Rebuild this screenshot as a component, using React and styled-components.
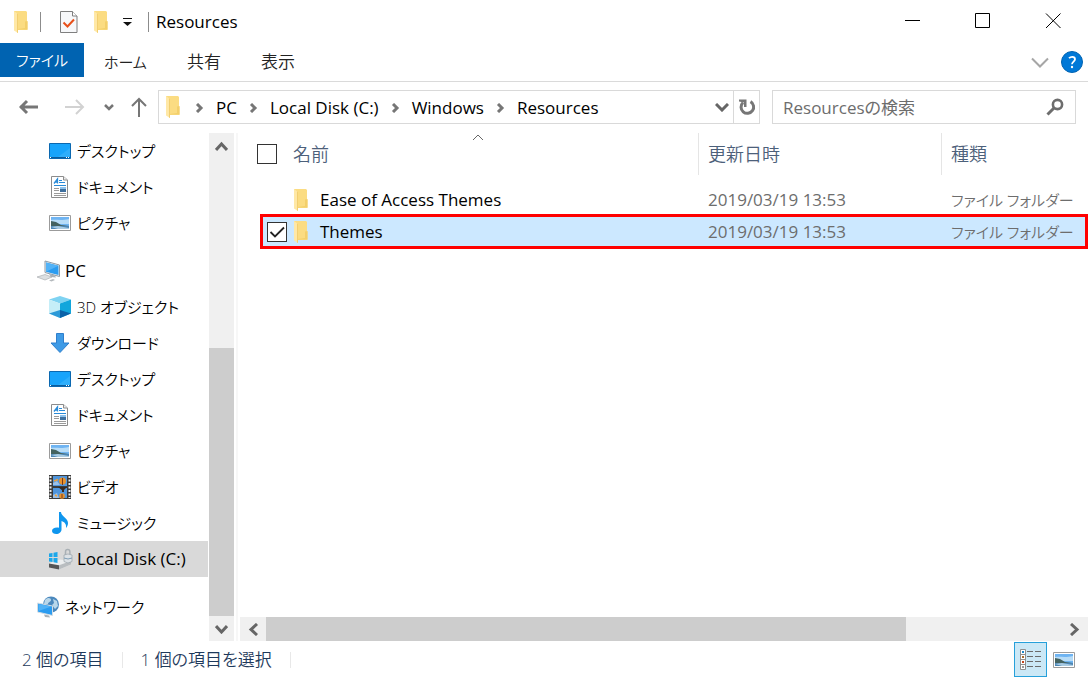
import React, { useState } from 'react';
import styled, { createGlobalStyle } from 'styled-components';

const GlobalStyle = createGlobalStyle`
  * {
    box-sizing: border-box;
  }
  html,
  body,
  #root {
    height: 100%;
    margin: 0;
  }
  body {
    background: #fff;
    color: #000;
    font: 17px/24px 'Open Sans', 'Noto Sans CJK JP', sans-serif;
    font-feature-settings: 'palt';
  }
  button,
  input {
    font: inherit;
    font-feature-settings: inherit;
    color: inherit;
  }
  svg {
    display: block;
    flex: none;
  }
`;

const Window = styled.div`
  display: flex;
  flex-direction: column;
  min-height: 100%;
  overflow: hidden;
`;

const PlainButton = styled.button`
  display: flex;
  align-items: center;
  justify-content: center;
  padding: 0;
  border: 0;
  background: none;
  white-space: nowrap;
`;

/* title bar */

const TitleBar = styled.header`
  display: flex;
  align-items: center;
  height: 43px;
  padding-left: 13px;
`;

const QuickAccess = styled.div`
  display: flex;
  align-items: center;
  gap: 15px;
`;

const AppIcon = styled.div`
  display: flex;
  align-items: center;
  gap: 12px;
  margin-right: 4px;
`;

const Divider = styled.span`
  width: 1px;
  height: ${(props) => props.$height || 20}px;
  background: ${(props) => props.$color || '#8c8c8c'};
`;

const Title = styled.h1`
  flex: 1;
  margin: 0 0 0 7px;
  font-size: 17px;
  font-weight: 400;
`;

const CaptionButton = styled(PlainButton)`
  width: 70px;
  height: 41px;
  margin-bottom: 2px;
`;

/* ribbon */

const Ribbon = styled.nav`
  display: flex;
  height: 39px;
  padding-right: 5px;
  border-bottom: 1px solid #dadada;
`;

const RibbonTab = styled(PlainButton)`
  height: 38px;
  padding: 0 20px;
  color: #222;
  font-size: ${(props) => (props.$kana ? 15 : 17)}px;
  font-weight: 350;
`;

const FileTab = styled(RibbonTab)`
  width: 84px;
  height: 34px;
  padding: 0;
  background: #0063b1;
  color: #fff;
`;

const RibbonTools = styled.div`
  display: flex;
  align-items: center;
  gap: 12px;
  margin-left: auto;
`;

/* address row */

const AddressRow = styled.div`
  display: flex;
  align-items: center;
  height: 51px;
  padding: 0 12px 1px 18px;
`;

const NavButtons = styled.div`
  display: flex;
  align-items: center;
  width: 140px;
`;

const NavButton = styled(PlainButton)`
  width: 22px;
  height: 34px;
  margin-right: ${(props) => props.$gap || 0}px;
`;

const AddressBox = styled.div`
  display: flex;
  flex: 1;
  align-items: center;
  height: 34px;
  padding-left: 6px;
  border: 1px solid #d9d9d9;
`;

const Crumbs = styled.ol`
  display: flex;
  flex: 1;
  margin: 0;
  padding: 2px 0 0 15px;
  list-style: none;
`;

const Crumb = styled.li`
  display: flex;
  align-items: center;
  gap: 12px;
  margin-right: 12px;
  white-space: nowrap;
`;

const RefreshButton = styled(PlainButton)`
  width: 26px;
  height: 32px;
  border-left: 1px solid #d9d9d9;
`;

const SearchBox = styled.label`
  display: flex;
  align-items: center;
  width: 304px;
  height: 34px;
  margin-left: 12px;
  padding: 0 11px 0 10px;
  border: 1px solid #d9d9d9;
`;

const SearchInput = styled.input`
  flex: 1;
  min-width: 0;
  padding: 2px 0 0;
  border: 0;
  outline: 0;
  background: none;
  &::placeholder {
    color: #6d6d6d;
    opacity: 1;
  }
`;

/* body */

const Body = styled.div`
  display: flex;
  flex: 1;
`;

const Sidebar = styled.aside`
  display: flex;
  width: 238px;
  border-right: 2px solid #f7f7f7;
`;

const Tree = styled.ul`
  width: 208px;
  margin: 0;
  padding: 0;
  list-style: none;
`;

const TreeItem = styled.li`
  margin-top: ${(props) => (props.$spaced ? 12 : 0)}px;
`;

const TreeLink = styled.a`
  display: flex;
  align-items: center;
  height: 36px;
  padding-left: ${(props) => (props.$root ? 37 : 49)}px;
  background: ${(props) => (props.$selected ? '#d9d9d9' : 'transparent')};
  color: #000;
  font-size: ${(props) => (props.$kana ? 15 : 17)}px;
  font-weight: ${(props) => (props.$kana ? 350 : 400)};
  text-decoration: none;
  white-space: nowrap;
`;

const TreeIcon = styled.span`
  width: 28px;
`;

const ScrollBar = styled.div`
  display: flex;
  flex-direction: ${(props) => (props.$horizontal ? 'row' : 'column')};
  width: ${(props) => (props.$horizontal ? 'auto' : '25px')};
  height: ${(props) => (props.$horizontal ? '24px' : 'auto')};
  margin-left: ${(props) => (props.$horizontal ? 0 : 1)}px;
  background: #f0f0f0;
`;

const ScrollButton = styled(PlainButton)`
  flex: none;
  width: ${(props) => (props.$wide ? 26 : 25)}px;
  height: ${(props) => (props.$wide ? 24 : 25)}px;
`;

const ScrollSpace = styled.div`
  flex: ${(props) => props.$part} 0 0;
`;

const ScrollThumb = styled.div`
  flex: ${(props) => props.$part} 0 0;
  background: #cdcdcd;
`;

const Main = styled.main`
  display: flex;
  flex: 1;
  flex-direction: column;
  min-width: 0;
  padding-left: 2px;
`;

const FileArea = styled.div`
  flex: 1;
  padding-left: 17px;
`;

const FileTable = styled.table`
  width: 100%;
  border-spacing: 0;
  table-layout: fixed;
`;

const HeadCell = styled.th`
  position: relative;
  width: ${(props) => props.$width || 'auto'};
  padding: 0 0 9px;
  color: #4c607a;
  font-size: 18px;
  font-weight: 350;
  text-align: left;
`;

const HeadLabel = styled.div`
  display: flex;
  align-items: center;
  gap: 16px;
  height: 42px;
  padding-left: ${(props) => (props.$line ? 9 : 0)}px;
  border-left: ${(props) => (props.$line ? '1px solid #e5e5e5' : '0')};
`;

const SortMark = styled.span`
  position: absolute;
  top: 1px;
  left: 50%;
  margin-left: -6px;
`;

const FileCell = styled.td`
  height: 32px;
  padding: 0 0 0 10px;
  color: #6d6d6d;
  white-space: nowrap;
`;

const KanaText = styled.span`
  font-size: 15px;
  font-weight: 350;
`;

const NameCell = styled(FileCell)`
  padding-left: 7px;
  border-left: 3px solid transparent;
  background-clip: padding-box;
  color: #000;
`;

const FileRow = styled.tr`
  position: relative;
  ${(props) =>
    props.$selected &&
    `
    td {
      background-color: #cce8ff;
    }
    ${NameCell}::after {
      content: '';
      position: absolute;
      inset: -2px 0 -1px 3px;
      border: 3px solid #f00;
      pointer-events: none;
    }
  `}
`;

const NameLabel = styled.label`
  display: flex;
  align-items: center;
  gap: 6px;
`;

const FileName = styled.span`
  padding-left: 6px;
`;

const CheckBox = styled.input`
  flex: none;
  width: 20px;
  height: 20px;
  margin: 0;
  appearance: none;
  border: 1px solid #333;
  background: #fff;
  visibility: ${(props) => (props.$hidden ? 'hidden' : 'visible')};
  &:checked {
    background: #fff
      url("data:image/svg+xml,%3Csvg xmlns='http://www.w3.org/2000/svg' width='18' height='18'%3E%3Cpath d='M2.500 9l4.500 4.500L16 4.500' fill='none' stroke='%23222' stroke-width='1.800'/%3E%3C/svg%3E");
  }
`;

/* status bar */

const StatusBar = styled.footer`
  display: flex;
  align-items: center;
  gap: 18px;
  height: 37px;
  padding: 0 11px 0 22px;
  color: #1e395b;
  font-weight: 350;
`;

const ViewButtons = styled.div`
  display: flex;
  align-items: center;
  gap: 4px;
  margin-left: auto;
`;

const ViewButton = styled(PlainButton)`
  width: ${(props) => (props.$active ? 33 : 26)}px;
  height: 35px;
  border: ${(props) => (props.$active ? '1px solid #26a0da' : '0')};
  background: ${(props) => (props.$active ? '#cbe8f6' : 'none')};
`;

/* icons */

const FolderIcon = () => (
  <svg width="15" height="22" viewBox="0 0 15 22">
    <path d="M1 0h12l1 1v9l.5 1v8H1z" fill="#fbdc82" />
    <path d="M12 10.500l2.500-.5v8.500H5V18l7-1z" fill="#f3cf6b" />
    <path d="M1 0l4 3v19l-4-2.500z" fill="#ffe8a6" />
    <path d="M5 3v19l-1-.6V2.200z" fill="#f2cf72" />
  </svg>
);

const PropertiesIcon = () => (
  <svg width="18" height="22" viewBox="0 0 18 22">
    <path d="M.5.5h12l4.500 4.500v16.500H.5z" fill="#f7f8fa" stroke="#7f7f7f" />
    <path d="M12.500.5V5H17" fill="#fff" stroke="#7f7f7f" />
    <path d="M3.500 11.500l4 4 6.500-7" fill="none" stroke="#e8501a" strokeWidth="2" />
  </svg>
);

const MenuArrowIcon = () => (
  <svg width="10" height="8" viewBox="0 0 10 8">
    <path d="M0 0h9v1H0zM0 4h9L4.500 8z" fill="#111" />
  </svg>
);

const Chevron = ({ d, width, height, color = '#666', stroke = 2.500 }) => (
  <svg width={width} height={height} viewBox={`0 0 ${width} ${height}`}>
    <path d={d} fill="none" stroke={color} strokeWidth={stroke} />
  </svg>
);

const CaptionIcon = ({ d }) => (
  <svg width="16" height="16" viewBox="0 0 16 16">
    <path d={d} fill="none" stroke="#000" />
  </svg>
);

const HelpIcon = () => (
  <svg width="22" height="22" viewBox="0 0 22 22">
    <circle cx="11" cy="11" r="10.500" fill="#0078d7" stroke="#0063b1" />
    <path
      d="M8 7.200c1-1 2-1.400 3.200-1.400 1.700 0 2.800.9 2.800 2.400 0 2.400-3 2.500-3 5.100"
      fill="none"
      stroke="#fff"
      strokeWidth="1.800"
    />
    <circle cx="11" cy="16" r="1.200" fill="#fff" />
  </svg>
);

const ArrowIcon = ({ d, color, stroke = 2 }) => (
  <svg width="20" height="20" viewBox="0 0 20 20">
    <path d={d} fill="none" stroke={color} strokeWidth={stroke} />
  </svg>
);

const RefreshIcon = () => (
  <svg width="18" height="18" viewBox="0 0 18 18">
    <path d="M5 4.500A6.300 6.300 0 1 0 12.500 3.600" fill="none" stroke="#767676" strokeWidth="3" />
    <path d="M1 1.500h7.500V9H6V4.500L1 3.500z" fill="#767676" />
  </svg>
);

const SearchIcon = () => (
  <svg width="18" height="18" viewBox="0 0 18 18">
    <circle cx="11.500" cy="6.500" r="4.600" fill="none" stroke="#6d6d6d" strokeWidth="2.600" />
    <path d="M8 10L1.500 16.500" stroke="#6d6d6d" strokeWidth="3" />
  </svg>
);

const DesktopIcon = () => (
  <svg width="22" height="16" viewBox="0 0 22 16">
    <path d="M.5.5h21v15H.5z" fill="#18a4fb" stroke="#0b68b0" />
    <path d="M21 5v9H9z" fill="#2eaefb" />
    <path d="M1 14h20v1H1z" fill="#0b5c9c" />
    <path d="M1 14h1v1H1zM17 14h1v1h-1zM19 14h1v1h-1z" fill="#fff" />
  </svg>
);

const DocumentIcon = () => (
  <svg width="22" height="22" viewBox="0 0 22 22">
    <path d="M2.500.5h12l4 3.500v17.500h-16z" fill="#fff" stroke="#8c8c8c" />
    <path d="M14.500.5V4h4" fill="#eee" stroke="#8c8c8c" />
    <path d="M5 7.500L8.500 3v4.500M6.500 6h2" fill="none" stroke="#2a8bd8" strokeWidth="1.300" />
    <path d="M10 4.500h3M10 6.500h6M5 9.500h12" stroke="#2a8bd8" />
    <path d="M5 12.500h5M5 14.500h5M5 17.500h12M5 19.500h12" stroke="#9a9a9a" />
    <path d="M11 11h6v5h-6z" fill="#3e6f9e" />
    <path d="M11 11h6v2h-6z" fill="#8cc1ec" />
  </svg>
);

const PictureIcon = () => (
  <svg width="22" height="16" viewBox="0 0 22 16">
    <path d="M.5.5h21v15H.5z" fill="#fff" stroke="#9b9b9b" />
    <path d="M2 2h18v12H2z" fill="#6fb4f2" />
    <path d="M2 5c5-1 9 1 18-1v5H2z" fill="#b7dcf7" />
    <path d="M2 6l5 1 5 3 8 1v1H2z" fill="#44625f" />
    <path d="M2 11h18v3H2z" fill="#4c86b4" />
    <path d="M2 12l7-1 11 2v1H9z" fill="#a9cbe2" />
  </svg>
);

const ComputerIcon = () => (
  <svg width="24" height="22" viewBox="0 0 24 22">
    <path d="M8 1l14.500 4v11.500L8 12.500z" fill="#e9eef2" stroke="#8e9aa4" />
    <path d="M9 2.500l12.500 3.300v9.200L9 11.700z" fill="#2b9cf0" />
    <path d="M9 2.500l12.500 3.300L9 11.700z" fill="#52b2f6" />
    <path d="M12 14l6 1.500 1 2-5-.5z" fill="#a7b0b7" />
    <path d="M0 17l8-2.500 7 2.500-7 3z" fill="#dcdfe1" stroke="#a1a6aa" strokeWidth=".6" />
    <path d="M12 20.500l4-1.500 2 1-3.500 1.500z" fill="#b4b9bd" />
  </svg>
);

const CubeIcon = () => (
  <svg width="22" height="22" viewBox="0 0 22 22">
    <path d="M11 0l11 3.500-11 4L0 3.500z" fill="#7fd3f2" />
    <path d="M0 3.500l11 4V22L0 17.500z" fill="#c5eef8" />
    <path d="M22 3.500l-11 4V22l11-4.500z" fill="#12a6dc" />
    <path d="M0 17.500L11 14v8z" fill="#2c9ad8" />
    <path d="M22 17.500L11 14v8z" fill="#0b62a8" />
  </svg>
);

const DownloadIcon = () => (
  <svg width="22" height="22" viewBox="0 0 22 22">
    <path d="M7.500 1.500h7v9.500h5.500L11 20.500 2 11h5.500z" fill="#3f9be6" stroke="#2f7fcc" />
  </svg>
);

const VideoIcon = () => (
  <svg width="22" height="24" viewBox="0 0 22 24">
    <path d="M0 0h22v24H0z" fill="#3b3b3b" />
    <path d="M1.500 1v22M20.500 1v22" stroke="#eee" strokeWidth="2" strokeDasharray="2 1.500" />
    <path d="M4 1h14v10H4zM4 13h14v10H4z" fill="#4f95dc" />
    <path d="M4 8l4-2 3 4H4zM4 20l4-2 2 5H4z" fill="#9cc0e6" />
    <circle cx="13.500" cy="6" r="3.500" fill="#e8922d" />
    <path d="M13.500 3v7" stroke="#7a3a18" />
    <path d="M9 12l5 4 4-4z" fill="#37291f" />
    <path d="M14 15v2" stroke="#37291f" strokeWidth="2" />
    <circle cx="13" cy="21" r="2.800" fill="#e8922d" />
    <path d="M13 19v4" stroke="#7a3a18" />
    <path d="M5 6l4-1.500M6 20l2 1" stroke="#f0a13b" strokeWidth="1.500" />
  </svg>
);

const MusicIcon = () => (
  <svg width="22" height="22" viewBox="0 0 22 22">
    <path
      d="M10 0h2c0 4 7 6 7 11 0 2-.8 3.600-2 5 .6-4-1.500-6-4.500-7v8.500c0 2.500-2.500 4.500-5.200 4.500C5 22 3 21 3 19c0-2.400 2.800-4 7-3.300z"
      fill="#0f96ee"
    />
  </svg>
);

const DriveIcon = () => (
  <svg width="24" height="22" viewBox="0 0 24 22">
    <path d="M0 15.500l11-4 11 1.500v3.500l-12 5-10-2z" fill="#eceeef" />
    <path d="M0 15.500l10 1.700v4.300l-10-2z" fill="#555" />
    <path d="M10 17.200l12-4.200v3.500l-12 5z" fill="#b9bdc0" />
    <path
      d="M0 5.500l3.500-.5v4H0zM4.500 4.800L8.500 4v5h-4zM0 10h3.500v4L0 13.500zM4.500 10h4v5l-4-.8z"
      fill="#1ba7ea"
    />
    <path d="M16.500 7.500V3.800a2.200 2.200 0 0 1 4.400 0v3.700" fill="none" stroke="#a9b0b5" strokeWidth="1.500" />
    <path d="M15 7l4-1 4 1v6.500l-4 1.500-4-1.500z" fill="#dde2e6" stroke="#9aa4ab" strokeWidth=".7" />
    <path d="M15 10l4 1 4-1" fill="none" stroke="#7d9db5" />
  </svg>
);

const NetworkIcon = () => (
  <svg width="23" height="22" viewBox="0 0 23 22">
    <circle cx="14" cy="8.500" r="8" fill="#4b88bd" />
    <path d="M8 4c3-3 6-2 6 0s-3 2-3 4H7zM16 3l4 2 1 5-3 3-3-4 2-2z" fill="#b9d7ea" />
    <path d="M.5 7l15 3v9.500l-15-3.500z" fill="#2b9cf0" stroke="#d4dde4" />
    <path d="M1.500 8l13 2.600L1.500 15z" fill="#4fb1f6" />
    <path d="M7 18.500l5 1 1 2-5-.5z" fill="#aab2b8" />
  </svg>
);

const DetailsIcon = () => (
  <svg width="22" height="21" viewBox="0 0 22 21">
    <path d="M.5.5h5v20h-5zM.5 5.500h5M.5 10.500h5M.5 15.500h5" fill="#fff" stroke="#8f8f8f" />
    <path d="M2 2h2v2H2z" fill="#1c87c9" />
    <path d="M2 7h2v2H2z" fill="#a96c2c" />
    <path d="M2 12h2v2H2z" fill="#c6441a" />
    <path d="M2 17h2v2H2z" fill="#999" />
    <path
      d="M7 2.500h6M7 7.500h6M7 12.500h6M7 17.500h6M15 2.500h6M15 7.500h6M15 12.500h6M15 17.500h6"
      stroke="#6b6b6b"
    />
  </svg>
);

const crumbs = ['PC', 'Local Disk (C:)', 'Windows', 'Resources'];

const places = [
  { name: 'デスクトップ', icon: DesktopIcon, kana: true },
  { name: 'ドキュメント', icon: DocumentIcon, kana: true },
  { name: 'ピクチャ', icon: PictureIcon, kana: true },
  { name: 'PC', icon: ComputerIcon, root: true },
  { name: '3D オブジェクト', icon: CubeIcon, kana: true },
  { name: 'ダウンロード', icon: DownloadIcon, kana: true },
  { name: 'デスクトップ', icon: DesktopIcon, kana: true },
  { name: 'ドキュメント', icon: DocumentIcon, kana: true },
  { name: 'ピクチャ', icon: PictureIcon, kana: true },
  { name: 'ビデオ', icon: VideoIcon, kana: true },
  { name: 'ミュージック', icon: MusicIcon, kana: true },
  { name: 'Local Disk (C:)', icon: DriveIcon, selected: true },
  { name: 'ネットワーク', icon: NetworkIcon, root: true, kana: true },
];

const files = [
  { name: 'Ease of Access Themes', date: '2019/03/19 13:53', type: 'ファイル フォルダー' },
  { name: 'Themes', date: '2019/03/19 13:53', type: 'ファイル フォルダー' },
];

const App = () => {
  const [checked, setChecked] = useState('Themes');

  return (
    <Window>
      <GlobalStyle />
      <TitleBar>
        <QuickAccess>
          <AppIcon>
            <FolderIcon />
            <Divider />
          </AppIcon>
          <PlainButton aria-label="プロパティ">
            <PropertiesIcon />
          </PlainButton>
          <PlainButton aria-label="新しいフォルダー">
            <FolderIcon />
          </PlainButton>
          <PlainButton aria-label="カスタマイズ">
            <MenuArrowIcon />
          </PlainButton>
          <Divider />
        </QuickAccess>
        <Title>Resources</Title>
        <CaptionButton aria-label="最小化">
          <CaptionIcon d="M0 7.500h15" />
        </CaptionButton>
        <CaptionButton aria-label="最大化">
          <CaptionIcon d="M.5.5h14v14H.5z" />
        </CaptionButton>
        <CaptionButton aria-label="閉じる">
          <CaptionIcon d="M1 .5l14.500 14.500M15.500.5L1 15" />
        </CaptionButton>
      </TitleBar>

      <Ribbon>
        <FileTab $kana>ファイル</FileTab>
        <RibbonTab $kana>ホーム</RibbonTab>
        <RibbonTab>共有</RibbonTab>
        <RibbonTab>表示</RibbonTab>
        <RibbonTools>
          <PlainButton aria-label="リボンの展開">
            <Chevron d="M1 1.500l8 8 8-8" width={18} height={11} color="#a6a6a6" stroke={2} />
          </PlainButton>
          <PlainButton aria-label="ヘルプ">
            <HelpIcon />
          </PlainButton>
        </RibbonTools>
      </Ribbon>

      <AddressRow>
        <NavButtons>
          <NavButton aria-label="戻る" $gap={24}>
            <ArrowIcon d="M19 10H1M8 4l-6 6 6 6" color="#767676" stroke={3} />
          </NavButton>
          <NavButton aria-label="進む" $gap={12}>
            <ArrowIcon d="M0 10h18M11 3l7 7-7 7" color="#d2d2d2" />
          </NavButton>
          <NavButton aria-label="最近表示した場所" $gap={8}>
            <Chevron d="M1 1l4 4 4-4" width={10} height={7} color="#767676" />
          </NavButton>
          <NavButton aria-label="上へ">
            <ArrowIcon d="M10 20V2M3 9l7-7 7 7" color="#767676" />
          </NavButton>
        </NavButtons>
        <AddressBox>
          <FolderIcon />
          <Crumbs>
            {crumbs.map((crumb) => (
              <Crumb key={crumb}>
                <Chevron d="M2 1l4 4-4 4" width={9} height={10} color="#767676" stroke={3} />
                <PlainButton>{crumb}</PlainButton>
              </Crumb>
            ))}
          </Crumbs>
          <NavButton aria-label="以前の場所">
            <Chevron d="M1 1l6 6 6-6" width={14} height={9} stroke={3} />
          </NavButton>
          <RefreshButton aria-label="最新の情報に更新">
            <RefreshIcon />
          </RefreshButton>
        </AddressBox>
        <SearchBox>
          <SearchInput aria-label="Resourcesの検索" placeholder="Resourcesの検索" />
          <SearchIcon />
        </SearchBox>
      </AddressRow>

      <Body>
        <Sidebar>
          <Tree>
            {places.map(({ name, icon: Icon, root, kana, selected }, i) => (
              <TreeItem key={i} $spaced={root}>
                <TreeLink href="#" $root={root} $kana={kana} $selected={selected}>
                  <TreeIcon>
                    <Icon />
                  </TreeIcon>
                  {name}
                </TreeLink>
              </TreeItem>
            ))}
          </Tree>
          <ScrollBar>
            <ScrollButton aria-label="上へスクロール">
              <Chevron d="M1 9l5.500-6L12 9" width={13} height={10} stroke={3} />
            </ScrollButton>
            <ScrollSpace $part={190} />
            <ScrollThumb $part={268} />
            <ScrollButton aria-label="下へスクロール">
              <Chevron d="M1 2l5.500 6L12 2" width={13} height={10} stroke={3} />
            </ScrollButton>
          </ScrollBar>
        </Sidebar>

        <Main>
          <FileArea>
            <FileTable>
              <thead>
                <tr>
                  <HeadCell $width="441px">
                    <HeadLabel>
                      <CheckBox type="checkbox" aria-label="すべて選択" />
                      名前
                    </HeadLabel>
                    <SortMark>
                      <Chevron d="M1 6l5-5 5 5" width={12} height={7} stroke={1} />
                    </SortMark>
                  </HeadCell>
                  <HeadCell $width="243px">
                    <HeadLabel $line>更新日時</HeadLabel>
                  </HeadCell>
                  <HeadCell>
                    <HeadLabel $line>種類</HeadLabel>
                  </HeadCell>
                </tr>
              </thead>
              <tbody>
                {files.map((file) => (
                  <FileRow key={file.name} $selected={checked === file.name}>
                    <NameCell>
                      <NameLabel>
                        <CheckBox
                          type="checkbox"
                          checked={checked === file.name}
                          $hidden={checked !== file.name}
                          onChange={() => setChecked(checked === file.name ? '' : file.name)}
                        />
                        <FolderIcon />
                        <FileName>{file.name}</FileName>
                      </NameLabel>
                    </NameCell>
                    <FileCell>{file.date}</FileCell>
                    <FileCell>
                      <KanaText>{file.type}</KanaText>
                    </FileCell>
                  </FileRow>
                ))}
              </tbody>
            </FileTable>
          </FileArea>
          <ScrollBar $horizontal>
            <ScrollButton aria-label="左へスクロール" $wide>
              <Chevron d="M9 1L3 6.500 9 12" width={11} height={13} stroke={3} />
            </ScrollButton>
            <ScrollThumb $part={640} />
            <ScrollSpace $part={156} />
            <ScrollButton aria-label="右へスクロール" $wide>
              <Chevron d="M1 1l6 5.500L1 12" width={11} height={13} stroke={3} />
            </ScrollButton>
          </ScrollBar>
        </Main>
      </Body>

      <StatusBar>
        <span>2 個の項目</span>
        <Divider $height={16} $color="#e8e8e8" />
        <span>1 個の項目を選択</span>
        <Divider $height={16} $color="#e8e8e8" />
        <ViewButtons>
          <ViewButton aria-label="詳細" $active>
            <DetailsIcon />
          </ViewButton>
          <ViewButton aria-label="大アイコン">
            <PictureIcon />
          </ViewButton>
        </ViewButtons>
      </StatusBar>
    </Window>
  );
};

export default App;
